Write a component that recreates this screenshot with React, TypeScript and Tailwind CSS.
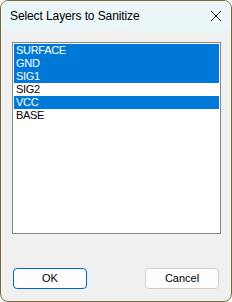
import React from "react";

const items = [
  { name: "SURFACE", sel: true },
  { name: "GND", sel: true },
  { name: "SIG1", sel: true },
  { name: "SIG2", sel: false },
  { name: "VCC", sel: true },
  { name: "BASE", sel: false },
];

export default function App() {
  return (
    <div className="w-[232px] h-[302px] bg-white">
      <div className="w-[232px] h-[302px] border border-[#7a6b3c] rounded-[8px] overflow-hidden bg-[#f0f0f0] flex flex-col font-['Liberation_Sans',Arial,sans-serif]">
        <div className="h-[30px] bg-[#eaf6f8] flex items-center justify-between pl-[9px] pr-[9px] shrink-0">
          <span className="text-[12px] text-black leading-none tracking-[-0.1px]">Select Layers to Sanitize</span>
          <svg width="12" height="12" viewBox="0 0 12 12">
            <path d="M1 1 L11 11 M11 1 L1 11" stroke="#1a1a1a" strokeWidth="1" fill="none" />
          </svg>
        </div>
        <div className="flex flex-col px-[11px] pt-[11px] flex-1">
          <div className="w-[209px] h-[192px] border border-[#828790] bg-white p-[1px] shrink-0">
            {items.map((it) => (
              <div
                key={it.name}
                className={`h-[13px] leading-[13px] pl-[2px] text-[11px] tracking-[-0.3px] ${
                  it.sel ? "bg-[#0078d7] text-white" : "text-black"
                }`}
              >
                {it.name}
              </div>
            ))}
          </div>
          <div className="flex justify-between mt-[34px] px-[1px]">
            <button className="w-[74px] h-[21px] rounded-[4px] border-[1.5px] border-[#0067c0] bg-[#fdfdfd] text-[11px] text-black leading-none">
              OK
            </button>
            <button className="w-[74px] h-[21px] rounded-[4px] border border-[#d0d0d0] bg-[#fdfdfd] text-[11px] text-black leading-none">
              Cancel
            </button>
          </div>
        </div>
      </div>
    </div>
  );
}
